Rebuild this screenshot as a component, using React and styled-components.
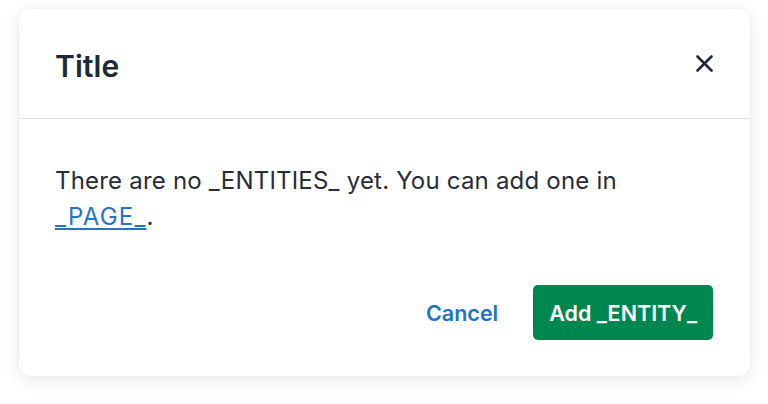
import React from 'react';
import styled, { createGlobalStyle } from 'styled-components';

const GlobalStyle = createGlobalStyle`
  html, body {
    margin: 0;
    padding: 0;
    background: #ffffff;
  }
  body {
    font-family: 'Inter', 'Noto Sans', sans-serif;
    -webkit-font-smoothing: antialiased;
  }
`;

const Page = styled.div`
  width: 768px;
  height: 404px;
  padding: 9px 18px 0 19px;
  box-sizing: border-box;
`;

const Modal = styled.section`
  width: 731px;
  background: #ffffff;
  border-radius: 11px;
  box-shadow: 0 0 2px rgba(0, 0, 0, 0.08), 0 4px 18px rgba(0, 0, 0, 0.09);
  overflow: hidden;
`;

const Header = styled.header`
  display: flex;
  align-items: center;
  justify-content: space-between;
  height: 110px;
  padding: 0 37px 0 36px;
  box-sizing: border-box;
  border-bottom: 1px solid #e1e3e5;
`;

const Title = styled.h2`
  margin: 5px 0 0;
  font-size: 30px;
  line-height: 36px;
  font-weight: 600;
  color: #202a36;
  letter-spacing: 0.1px;
`;

const CloseButton = styled.button`
  display: flex;
  align-items: center;
  justify-content: center;
  width: 17px;
  height: 17px;
  padding: 0;
  border: none;
  background: transparent;
  color: #202a36;
  cursor: pointer;
`;

const Body = styled.div`
  padding: 44px 37px 0 36px;
`;

const Message = styled.p`
  margin: 0;
  font-size: 24px;
  line-height: 36px;
  letter-spacing: 0.2px;
  color: #262d38;
`;

const Link = styled.a`
  color: #2574ca;
  letter-spacing: 1.2px;
  text-decoration: underline;
  text-decoration-thickness: 2px;
  text-underline-offset: 3px;
`;

const Footer = styled.footer`
  display: flex;
  justify-content: flex-end;
  align-items: center;
  gap: 35px;
  padding: 50px 37px 36px;
`;

const TextButton = styled.button`
  padding: 0;
  border: none;
  background: transparent;
  font-family: inherit;
  font-size: 21.5px;
  font-weight: 600;
  color: #2271c9;
  cursor: pointer;
`;

const PrimaryButton = styled.button`
  height: 55px;
  padding: 0 16px;
  border: none;
  border-radius: 5px;
  background: #00864f;
  color: #ffffff;
  font-family: inherit;
  font-size: 21.5px;
  font-weight: 600;
  cursor: pointer;
`;

const CloseIcon = () => (
  <svg width="17" height="17" viewBox="0 0 17 17" fill="none">
    <path d="M1.5 1.5L15.5 15.5M15.5 1.5L1.5 15.5" stroke="currentColor" strokeWidth="2.6" strokeLinecap="round" />
  </svg>
);

export default function App() {
  return (
    <>
      <GlobalStyle />
      <Page>
        <Modal>
          <Header>
            <Title>Title</Title>
            <CloseButton aria-label="Close">
              <CloseIcon />
            </CloseButton>
          </Header>
          <Body>
            <Message>
              There are no _ENTITIES_ yet. You can add one in <Link href="#">_PAGE_</Link>.
            </Message>
          </Body>
          <Footer>
            <TextButton>Cancel</TextButton>
            <PrimaryButton>Add _ENTITY_</PrimaryButton>
          </Footer>
        </Modal>
      </Page>
    </>
  );
}
